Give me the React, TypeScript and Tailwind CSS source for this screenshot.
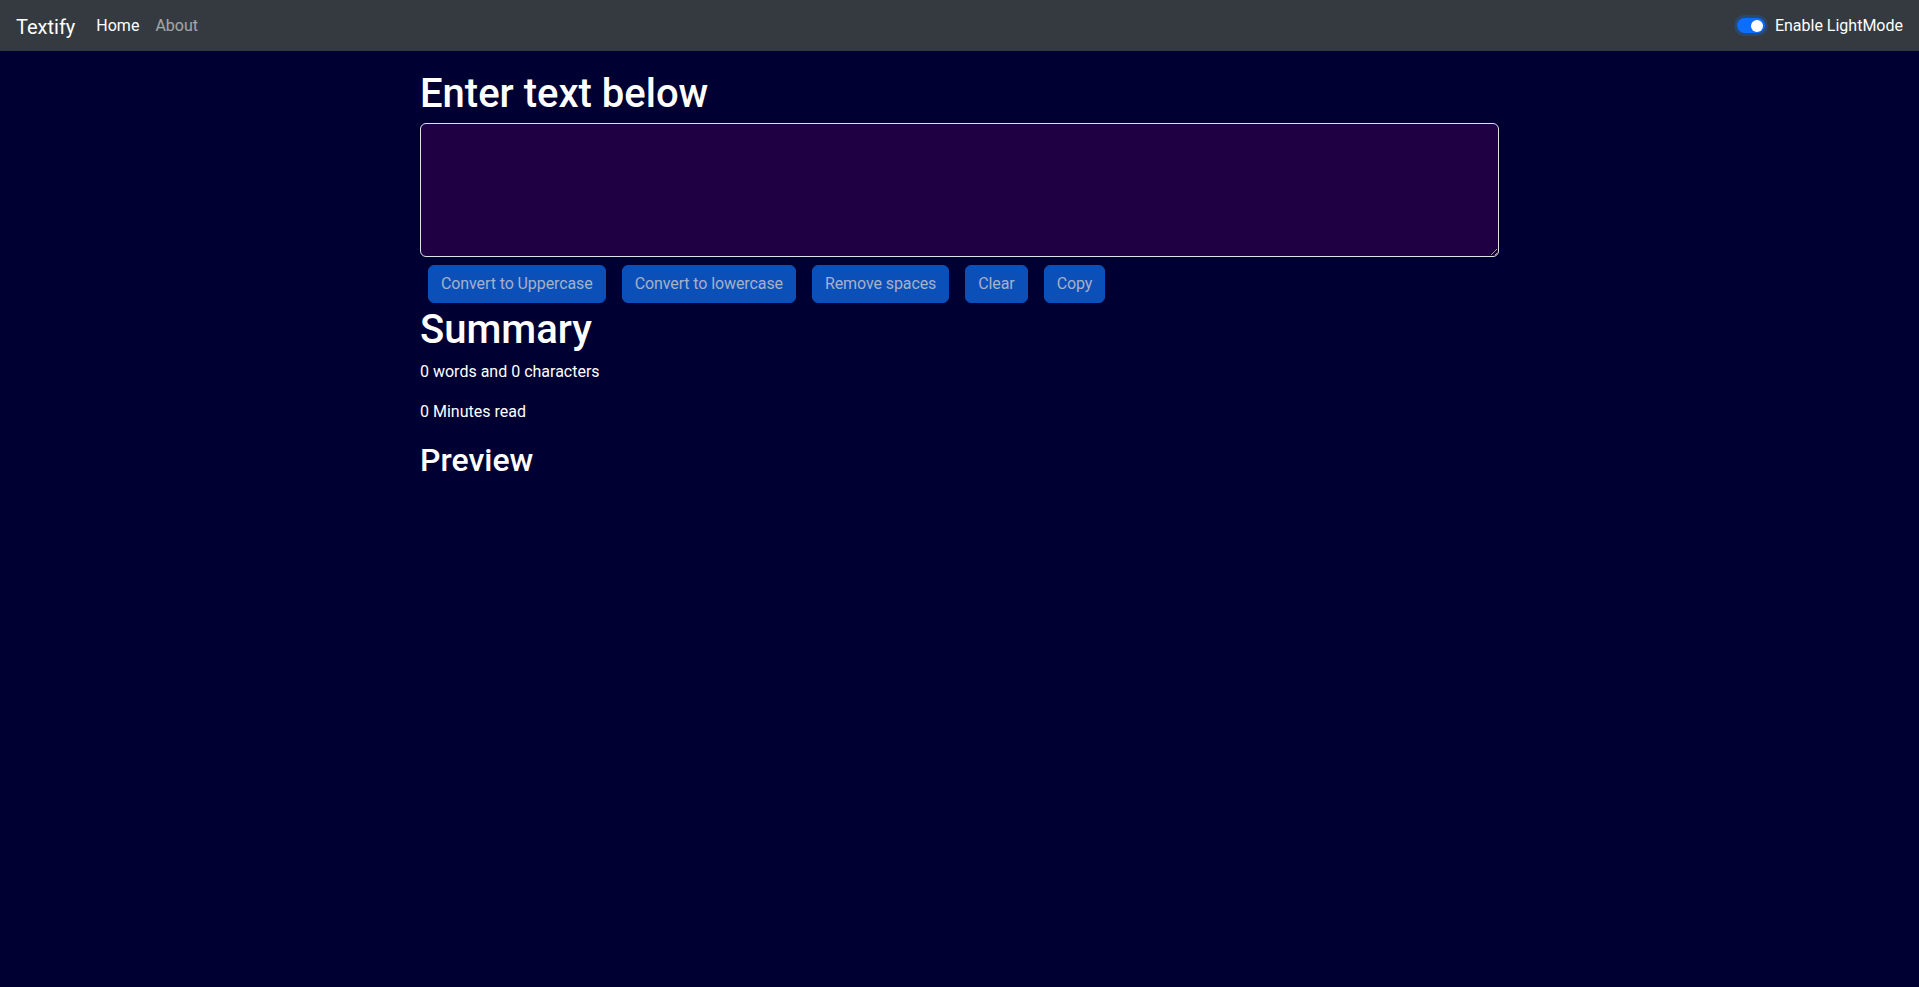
import { useState } from 'react'

export default function App() {
  const [text, setText] = useState('')

  const words = text.split(/\s+/).filter((w) => w.length > 0).length
  const buttonClass =
    'mx-2 rounded-[6px] border border-[#0b50b9] bg-[#0b50b9] px-3 py-1.5 text-base leading-6 text-[#a8afc8] tracking-[-0.1px]'

  return (
    <div className="min-h-screen bg-[#000033] font-['Roboto',sans-serif] text-white">
      {/* Navbar */}
      <nav className="flex h-[51px] items-center bg-[#343a40] px-4">
        <a href="#" className="mr-[13px] pt-[2px] text-[20px] leading-[30px] text-white">
          Textify
        </a>
        <ul className="flex pt-[1px]">
          <li>
            <a href="#" className="px-2 text-base leading-6 text-white">
              Home
            </a>
          </li>
          <li>
            <a href="#" className="px-2 text-base leading-6 text-white/55">
              About
            </a>
          </li>
        </ul>
        <div className="ml-auto flex items-center gap-[10px]">
          <span className="flex h-[15px] w-[28px] items-center justify-end rounded-full bg-[#0d6efd] pr-[1.5px] shadow-[0_0_0_3px_rgba(13,110,253,0.25)]">
            <span className="h-3 w-3 rounded-full bg-white" />
          </span>
          <label className="pt-[1px] text-base leading-6 text-white">Enable LightMode</label>
        </div>
      </nav>

      {/* Main */}
      <main className="mx-auto mt-4 w-[1079px]">
        <h1 className="mb-[5px] pt-[3px] text-[40px] font-medium leading-[48px]">Enter text below</h1>
        <textarea
          rows={5}
          value={text}
          onChange={(e) => setText(e.target.value)}
          className="block w-full rounded-[6px] border border-[#dee2e6] bg-[#1e0043] px-3 py-1.5 text-base leading-6 text-white outline-none"
        />
        <div className="mt-2 flex">
          <button disabled className={buttonClass}>Convert to Uppercase</button>
          <button disabled className={buttonClass}>Convert to lowercase</button>
          <button disabled className={buttonClass}>Remove spaces</button>
          <button disabled className={buttonClass}>Clear</button>
          <button disabled className={buttonClass}>Copy</button>
        </div>

        <h1 className="mb-[5px] pt-[3px] text-[40px] font-medium leading-[48px]">Summary</h1>
        <p className="mb-[15px] pt-[1px] text-base leading-6">
          {words} words and {text.length} characters
        </p>
        <p className="mb-[15px] pt-[1px] text-base leading-6">{0.008 * words} Minutes read</p>
        <h2 className="mb-2 pt-[2px] text-[32px] font-medium leading-[38.4px]">Preview</h2>
        <p className="text-base leading-6">{text}</p>
      </main>
    </div>
  )
}
